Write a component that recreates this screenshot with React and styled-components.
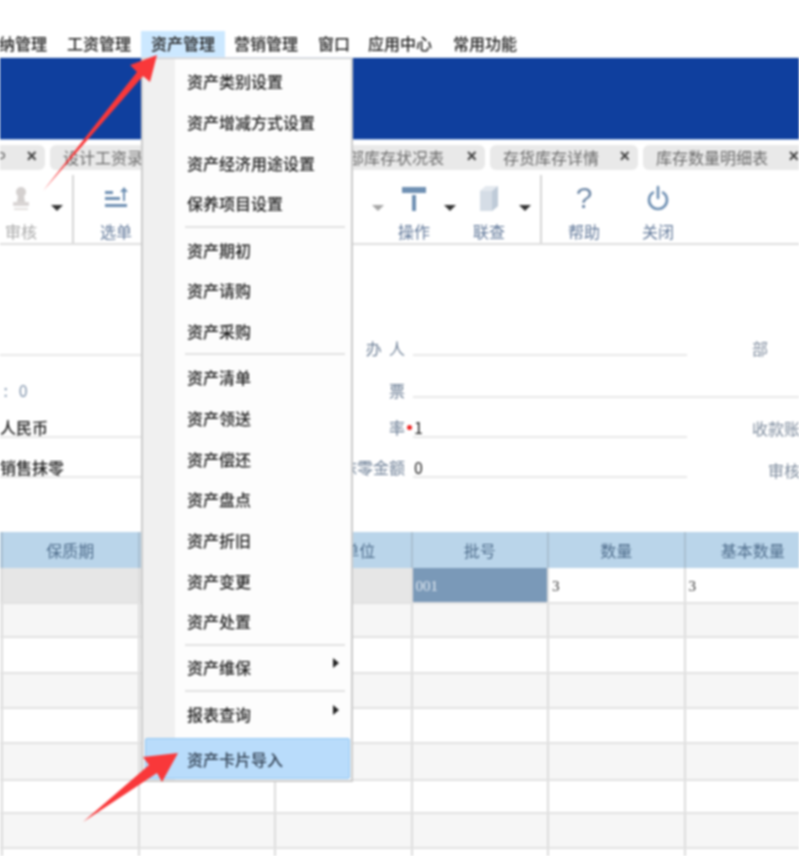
import React from 'react'
import styled, { createGlobalStyle } from 'styled-components'

const GlobalStyle = createGlobalStyle`
  html, body { margin: 0; padding: 0; background: #fff; overflow: hidden; }
  body { font-family: "Noto Sans CJK SC", "Liberation Sans", sans-serif; font-size: 16px; }
`

const Page = styled.div`
  position: relative;
  width: 799px;
  height: 856px;
  overflow: hidden;
  background: #fff;
  filter: blur(1px);
`

const MenuBar = styled.div`
  display: flex;
  height: 26px;
  padding-top: 31px;
  margin-left: -27px;
  border-bottom: 1px solid #dfe6f0;
`

const MenuBarItem = styled.div`
  padding: 0 10px;
  margin-right: ${p => p.$shift || 0}px;
  line-height: 25px;
  font-weight: 500;
  color: #222;
  white-space: nowrap;
  background: ${p => (p.$active ? '#cce8ff' : 'transparent')};
`

const Banner = styled.div`
  height: 81px;
  background: #0f3f9e;
  border-bottom: 1px solid #a9c0e6;
`

const TabBar = styled.div`
  display: flex;
  gap: 5px;
  height: 25px;
  padding-top: 5px;
  margin-left: -27px;
`

const Tab = styled.div`
  flex: none;
  width: ${p => p.$width}px;
  box-sizing: border-box;
  display: flex;
  align-items: center;
  justify-content: space-between;
  padding: 0 8px 2px 13px;
  background: #e9e9e9;
  border-radius: 6px;
  color: #6a6a6a;
  white-space: nowrap;
  overflow: hidden;
`

const TabClose = styled.span`
  font-family: "Liberation Sans", sans-serif;
  font-size: 18px;
  font-weight: bold;
  color: #444;
`

const Toolbar = styled.div`
  display: flex;
  height: 71px;
  margin-top: 2px;
  margin-left: -9px;
  border-bottom: 2px solid #dedede;
`

const Tool = styled.div`
  flex: none;
  width: 60px;
  display: flex;
  flex-direction: column;
  align-items: center;
  justify-content: flex-end;
  margin-left: ${p => p.$gap || 0}px;
  padding-bottom: 1px;
`

const ToolIcon = styled.div`
  height: 34px;
  display: flex;
  align-items: center;
  justify-content: center;
  margin-bottom: 5px;
  font-family: "Liberation Sans", sans-serif;
  font-size: 30px;
  color: #6d87a6;
`

const ToolLabel = styled.div`
  line-height: 22px;
  color: ${p => (p.$muted ? '#a9a9a9' : '#62799a')};
`

const Caret = styled.div`
  flex: none;
  align-self: flex-start;
  width: 0;
  height: 0;
  margin: 33px ${p => p.$after || 0}px 0 ${p => p.$before || 0}px;
  border: 6px solid transparent;
  border-bottom: 0;
  border-top-color: ${p => (p.$muted ? '#a5a5a5' : '#333')};
`

const Divider = styled.div`
  flex: none;
  width: 2px;
  margin: 3px 12px 0 9px;
  background: #d6d6d6;
`

const Form = styled.div`
  padding: 71px 0 54px;
`

const FormRow = styled.div`
  display: grid;
  grid-template-columns: 342px 71px 274px 1fr;
  height: 40px;
  margin-top: ${p => p.$top || 0}px;
`

const LeftField = styled.div`
  display: flex;
  align-items: flex-end;
  padding-bottom: ${p => (p.$noLine ? 0 : 1)}px;
  line-height: 16px;
  color: ${p => p.$color || '#222'};
  font-weight: ${p => (p.$noLine ? 400 : 500)};
  border-bottom: ${p => (p.$noLine ? '0' : '2px solid #e8e8e8')};
  white-space: pre;
`

const FieldLabel = styled.div`
  align-self: end;
  padding: 0 8px ${p => p.$bottom || 0}px 0;
  line-height: 16px;
  text-align: right;
  white-space: pre;
  color: #6d7f96;
  direction: rtl;
`

const FieldInput = styled.div`
  position: relative;
  grid-column: ${p => (p.$wide ? '3 / 5' : 'auto')};
  display: flex;
  align-items: flex-end;
  padding-left: 1px;
  line-height: 18px;
  color: #222;
  border-bottom: 2px solid #e8e8e8;
`

const Required = styled.span`
  position: absolute;
  left: -6px;
  bottom: 6px;
  width: 5px;
  height: 5px;
  border-radius: 50%;
  background: #ee2222;
`

const SideLabel = styled.div`
  align-self: end;
  padding: 0 0 ${p => p.$bottom || 0}px ${p => p.$indent}px;
  line-height: 16px;
  white-space: nowrap;
  color: #7c8a9c;
`

const Grid = styled.div`
  margin-left: -133.5px;
`

const HeaderRow = styled.div`
  display: flex;
  height: 36px;
  background: #bad5ea;
`

const HeaderCell = styled.div`
  flex: none;
  width: 136.5px;
  box-sizing: border-box;
  border-right: 2px solid #a9bfd1;
  line-height: 36px;
  text-align: center;
  color: #4f6d8c;
`

const GridRow = styled.div`
  display: flex;
  height: ${p => p.$height}px;
  background: ${p => (p.$alt ? '#f6f6f6' : '#fff')};
  border-bottom: 2px solid #e2e2e2;
  box-sizing: border-box;
`

const GridCell = styled.div`
  flex: none;
  width: 136.5px;
  box-sizing: border-box;
  padding-left: 3px;
  border-right: 2px solid #dcdcdc;
  line-height: 36px;
  font-family: "Liberation Serif", serif;
  font-size: 15px;
  color: ${p => (p.$selected ? '#dfe8f1' : '#333')};
  background: ${p => (p.$selected ? '#7a99b8' : p.$filled ? '#e6e6e6' : 'transparent')};
`

const DropMenu = styled.div`
  position: absolute;
  left: 141px;
  top: 58px;
  width: 212px;
  height: 724px;
  box-sizing: border-box;
  padding: 2px 0;
  border: 2px solid #cbcbcb;
  border-top-width: 1px;
  background: linear-gradient(to right, #f0f0f0 32px, #fdfdfd 32px);
`

const DropItem = styled.div`
  display: flex;
  align-items: center;
  justify-content: space-between;
  height: 40.7px;
  box-sizing: border-box;
  padding: 0 12px 0 44px;
  font-weight: 500;
  color: #222;
  white-space: nowrap;
`

const DropItemActive = styled(DropItem)`
  height: 41px;
  margin: 4px 1px 0 2px;
  padding-left: 41px;
  background: #b9dcfb;
  border: 1px solid #8fc6f4;
  border-radius: 2px;
  color: #344355;
`

const DropSeparator = styled.div`
  height: 2px;
  margin: 2px 6px 1.5px 42px;
  background: #e2e2e2;
`

const SubArrow = styled.span`
  width: 0;
  height: 0;
  margin-bottom: 8px;
  border: 5px solid transparent;
  border-right: 0;
  border-left: 6px solid #222;
`

const ArrowLayer = styled.svg`
  position: absolute;
  left: 0;
  top: 0;
  pointer-events: none;
`

// shift nudges the next menu title, the titles are not evenly spaced
const menus = [
  { name: '出纳管理' },
  { name: '工资管理' },
  { name: '资产管理', shift: -1 },
  { name: '营销管理' },
  { name: '窗口', shift: -2 },
  { name: '应用中心', shift: 1 },
  { name: '常用功能' },
]

const menuGroups = [
  ['资产类别设置', '资产增减方式设置', '资产经济用途设置', '保养项目设置'],
  ['资产期初', '资产请购', '资产采购'],
  ['资产清单', '资产领送', '资产偿还', '资产盘点', '资产折旧', '资产变更', '资产处置'],
]

const AuditIcon = () => (
  <svg width="24" height="28" viewBox="0 0 24 28">
    <circle cx="12" cy="8" r="5" fill="#d4d0cf" />
    <path d="M9 12h6l1 6H8z" fill="#d4d0cf" />
    <rect x="4" y="18" width="16" height="4" rx="1" fill="#d9d5d4" />
    <rect x="5" y="24" width="14" height="2" fill="#e3e0df" />
  </svg>
)

const PickIcon = () => (
  <svg width="28" height="26" viewBox="0 0 28 26" fill="#6f90b3">
    <rect x="3" y="6" width="8" height="3" />
    <rect x="3" y="12" width="15" height="3" />
    <rect x="3" y="19" width="22" height="3" />
    <path d="M22 2l4 5h-3v9h-2V7h-3z" />
  </svg>
)

const OperateIcon = () => (
  <svg width="26" height="28" viewBox="0 0 26 28" fill="#6f90b3">
    <rect x="1" y="3" width="24" height="6" />
    <rect x="11" y="11" width="4" height="16" />
  </svg>
)

const BoxIcon = () => (
  <svg width="24" height="28" viewBox="0 0 24 28">
    <path d="M3 7l6-5h12v20l-6 5H3z" fill="#d5dde6" />
    <path d="M15 7l6-5v20l-6 5z" fill="#bfcbd8" />
    <path d="M3 7l6-5h12l-6 5z" fill="#e4e9ef" />
  </svg>
)

const PowerIcon = () => (
  <svg width="26" height="28" viewBox="0 0 26 28" fill="none" stroke="#6f90b3" strokeWidth="2.6" strokeLinecap="round">
    <path d="M8 8.5a9 9 0 1 0 10 0" />
    <path d="M13 3v11" />
  </svg>
)

const App = () => {
  const rows = [
    { h: 36 }, { h: 34, alt: true }, { h: 36 }, { h: 35, alt: true }, { h: 35 },
    { h: 37, alt: true }, { h: 33 }, { h: 35, alt: true }, { h: 35 },
  ]

  return (
    <Page>
      <GlobalStyle />
      <MenuBar>
        {menus.map(m => (
          <MenuBarItem key={m.name} $active={m.name === '资产管理'} $shift={m.shift}>{m.name}</MenuBarItem>
        ))}
      </MenuBar>
      <Banner />
      <TabBar>
        <Tab $width={72}>AP<TabClose>×</TabClose></Tab>
        <Tab $width={232}>设计工资录入明细表单<TabClose>×</TabClose></Tab>
        <Tab $width={198}>各仓库部库存状况表<TabClose>×</TabClose></Tab>
        <Tab $width={148}>存货库存详情<TabClose>×</TabClose></Tab>
        <Tab $width={164}>库存数量明细表<TabClose>×</TabClose></Tab>
      </TabBar>
      <Toolbar>
        <Tool>
          <ToolIcon><AuditIcon /></ToolIcon>
          <ToolLabel $muted>审核</ToolLabel>
        </Tool>
        <Caret />
        <Divider />
        <Tool>
          <ToolIcon><PickIcon /></ToolIcon>
          <ToolLabel>选单</ToolLabel>
        </Tool>
        <Caret $muted $before={226} />
        <Tool>
          <ToolIcon><OperateIcon /></ToolIcon>
          <ToolLabel>操作</ToolLabel>
        </Tool>
        <Caret />
        <Tool $gap={3}>
          <ToolIcon><BoxIcon /></ToolIcon>
          <ToolLabel>联查</ToolLabel>
        </Tool>
        <Caret />
        <Divider />
        <Tool>
          <ToolIcon>?</ToolIcon>
          <ToolLabel>帮助</ToolLabel>
        </Tool>
        <Tool $gap={14}>
          <ToolIcon><PowerIcon /></ToolIcon>
          <ToolLabel>关闭</ToolLabel>
        </Tool>
      </Toolbar>
      <Form>
        <FormRow>
          <LeftField />
          <FieldLabel>{'经     办  人'}</FieldLabel>
          <FieldInput />
          <SideLabel $indent={65}>部　　门</SideLabel>
        </FormRow>
        <FormRow $top={2}>
          <LeftField $noLine $color="#7f93ab">{' :   0'}</LeftField>
          <FieldLabel>{'发  　　票'}</FieldLabel>
          <FieldInput $wide />
        </FormRow>
        <FormRow>
          <LeftField>人民币</LeftField>
          <FieldLabel $bottom={3}>{'汇  　　率'}</FieldLabel>
          <FieldInput><Required />1</FieldInput>
          <SideLabel $indent={65} $bottom={2}>收款账户</SideLabel>
        </FormRow>
        <FormRow>
          <LeftField>销售抹零</LeftField>
          <FieldLabel $bottom={3}>抹零金额</FieldLabel>
          <FieldInput>0</FieldInput>
          <SideLabel $indent={81}>审核人</SideLabel>
        </FormRow>
      </Form>
      <Grid>
        <HeaderRow>
          <HeaderCell>规格</HeaderCell>
          <HeaderCell>保质期</HeaderCell>
          <HeaderCell>生产日期</HeaderCell>
          <HeaderCell>计量单位</HeaderCell>
          <HeaderCell>批号</HeaderCell>
          <HeaderCell>数量</HeaderCell>
          <HeaderCell>基本数量</HeaderCell>
        </HeaderRow>
        {rows.map((r, i) => (
          <GridRow key={i} $alt={r.alt} $height={r.h}>
            <GridCell $filled={i === 0} />
            <GridCell $filled={i === 0} />
            <GridCell $filled={i === 0} />
            <GridCell $filled={i === 0} />
            <GridCell $selected={i === 0}>{i === 0 ? '001' : ''}</GridCell>
            <GridCell>{i === 0 ? '3' : ''}</GridCell>
            <GridCell>{i === 0 ? '3' : ''}</GridCell>
          </GridRow>
        ))}
      </Grid>
      <DropMenu>
        {menuGroups.map(group => (
          <React.Fragment key={group[0]}>
            {group.map(t => <DropItem key={t}>{t}</DropItem>)}
            <DropSeparator />
          </React.Fragment>
        ))}
        <DropItem>资产维保<SubArrow /></DropItem>
        <DropSeparator />
        <DropItem>报表查询<SubArrow /></DropItem>
        <DropItemActive>资产卡片导入</DropItemActive>
      </DropMenu>
      <ArrowLayer width="799" height="856" viewBox="0 0 799 856">
        <polygon points="43,191 137,72 130,65 157,55 150,82 143,76" fill="#f9383a" />
        <polygon points="83,822 149,765 143,757 178,753 162,782 157,773" fill="#f9383a" />
      </ArrowLayer>
    </Page>
  )
}

export default App
